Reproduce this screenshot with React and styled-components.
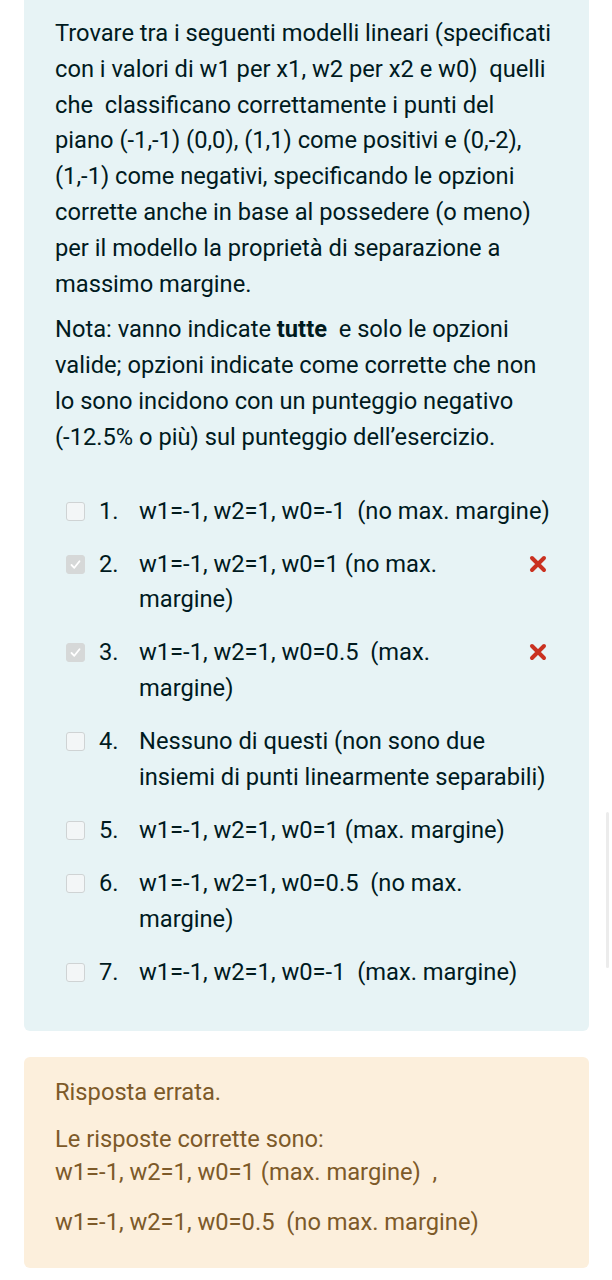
import React from "react";
import styled, { createGlobalStyle } from "styled-components";

const Global = createGlobalStyle`
  html, body { margin: 0; padding: 0; background: #ffffff; }
  body { font-family: Roboto, "Noto Sans", "Liberation Sans", sans-serif; }
`;

const Page = styled.div`
  display: flex;
  flex-direction: column;
  gap: 26px;
  padding: 0 23px 14px 24px;
`;

const Formulation = styled.div`
  background: #e7f3f5;
  color: #001a1e;
  border-radius: 0 0 6px 6px;
  padding: 16px 31px 41px 31px;
  font-size: 23.7px;
  line-height: 35.8px;
`;

const Para = styled.p`
  margin: 0 0 10px 0;
`;

const OptionList = styled.div`
  display: flex;
  flex-direction: column;
  gap: 17.7px;
  margin-top: 38px;
  padding-left: 11px;
`;

const Option = styled.div`
  display: flex;
  align-items: flex-start;
  line-height: 35.5px;
`;

const Box = styled.span`
  flex: 0 0 auto;
  box-sizing: border-box;
  width: 19px;
  height: 19px;
  margin-top: 8px;
  margin-right: 14px;
  border-radius: 3px;
  border: 1.5px solid ${(p) => (p.$checked ? "#d6d8d8" : "#cfd3d4")};
  background: ${(p) => (p.$checked ? "#d6d8d8" : "#f3f6f7")};
  display: flex;
  align-items: center;
  justify-content: center;
`;

const Num = styled.span`
  flex: 0 0 40px;
`;

const OptText = styled.span`
  flex: 1 1 auto;
`;

const Wrong = styled.span`
  flex: 0 0 auto;
  width: 20px;
  margin-left: 10px;
  margin-right: 9px;
  display: flex;
  padding-top: 8px;
`;

const Outcome = styled.div`
  background: #fcefdc;
  color: #7d5a29;
  border-radius: 6px;
  padding: 19px 31px 29px 31px;
  font-size: 23.7px;
  line-height: 33px;
`;

const OutPara = styled.p`
  margin: 0 0 ${(p) => p.$gap || 14}px 0;
  &:last-child { margin-bottom: 0; }
`;

const Scroll = styled.div`
  position: fixed;
  right: 3px;
  top: 812px;
  width: 3px;
  height: 156px;
  background: #ececec;
  border-radius: 2px;
`;

const Check = () => (
  <svg width="13" height="13" viewBox="0 0 13 13">
    <path d="M2.5 7 L5.3 9.8 L10.5 3.2" fill="none" stroke="#ffffff" strokeWidth="1.8" strokeLinecap="round" strokeLinejoin="round" />
  </svg>
);

const Cross = () => (
  <svg width="18" height="18" viewBox="0 0 18 18">
    <path d="M3 3 L15 15 M15 3 L3 15" stroke="#ca3120" strokeWidth="4" strokeLinecap="round" />
  </svg>
);

const S = "\u00a0";

const options = [
  { n: "1.", t: `w1=-1, w2=1, w0=-1${S} (no max. margine)` },
  { n: "2.", t: "w1=-1, w2=1, w0=1 (no max. margine)", c: true, x: true },
  { n: "3.", t: `w1=-1, w2=1, w0=0.5${S} (max. margine)`, c: true, x: true },
  { n: "4.", t: "Nessuno di questi (non sono due insiemi di punti linearmente separabili)" },
  { n: "5.", t: "w1=-1, w2=1, w0=1 (max. margine)" },
  { n: "6.", t: `w1=-1, w2=1, w0=0.5${S} (no max. margine)` },
  { n: "7.", t: `w1=-1, w2=1, w0=-1${S} (max. margine)` },
];

export default function App() {
  return (
    <>
      <Global />
      <Page>
        <Formulation>
          <Para>
            Trovare tra i seguenti modelli lineari (specificati con i valori di w1 per x1, w2 per x2 e w0){S} quelli
            che{S} classificano correttamente i punti del piano (-1,-1) (0,0), (1,1) come positivi e (0,-2), (1,-1)
            come negativi, specificando le opzioni corrette anche in base al possedere (o meno) per il modello la
            proprietà di separazione a massimo margine.
          </Para>
          <Para>
            Nota: vanno indicate <b>tutte</b>{S} e solo le opzioni valide; opzioni indicate come corrette che non lo
            sono incidono con un punteggio negativo (-12.5% o più) sul punteggio dell’esercizio.
          </Para>
          <OptionList>
            {options.map((o) => (
              <Option key={o.n}>
                <Box $checked={o.c}>{o.c && <Check />}</Box>
                <Num>{o.n}</Num>
                <OptText>{o.t}</OptText>
                {o.x && (
                  <Wrong>
                    <Cross />
                  </Wrong>
                )}
              </Option>
            ))}
          </OptionList>
        </Formulation>
        <Outcome>
          <OutPara $gap={14}>Risposta errata.</OutPara>
          <OutPara $gap={17}>
            Le risposte corrette sono:
            <br />
            w1=-1, w2=1, w0=1 (max. margine){S} ,
          </OutPara>
          <OutPara>w1=-1, w2=1, w0=0.5{S} (no max. margine)</OutPara>
        </Outcome>
      </Page>
      <Scroll />
    </>
  );
}
